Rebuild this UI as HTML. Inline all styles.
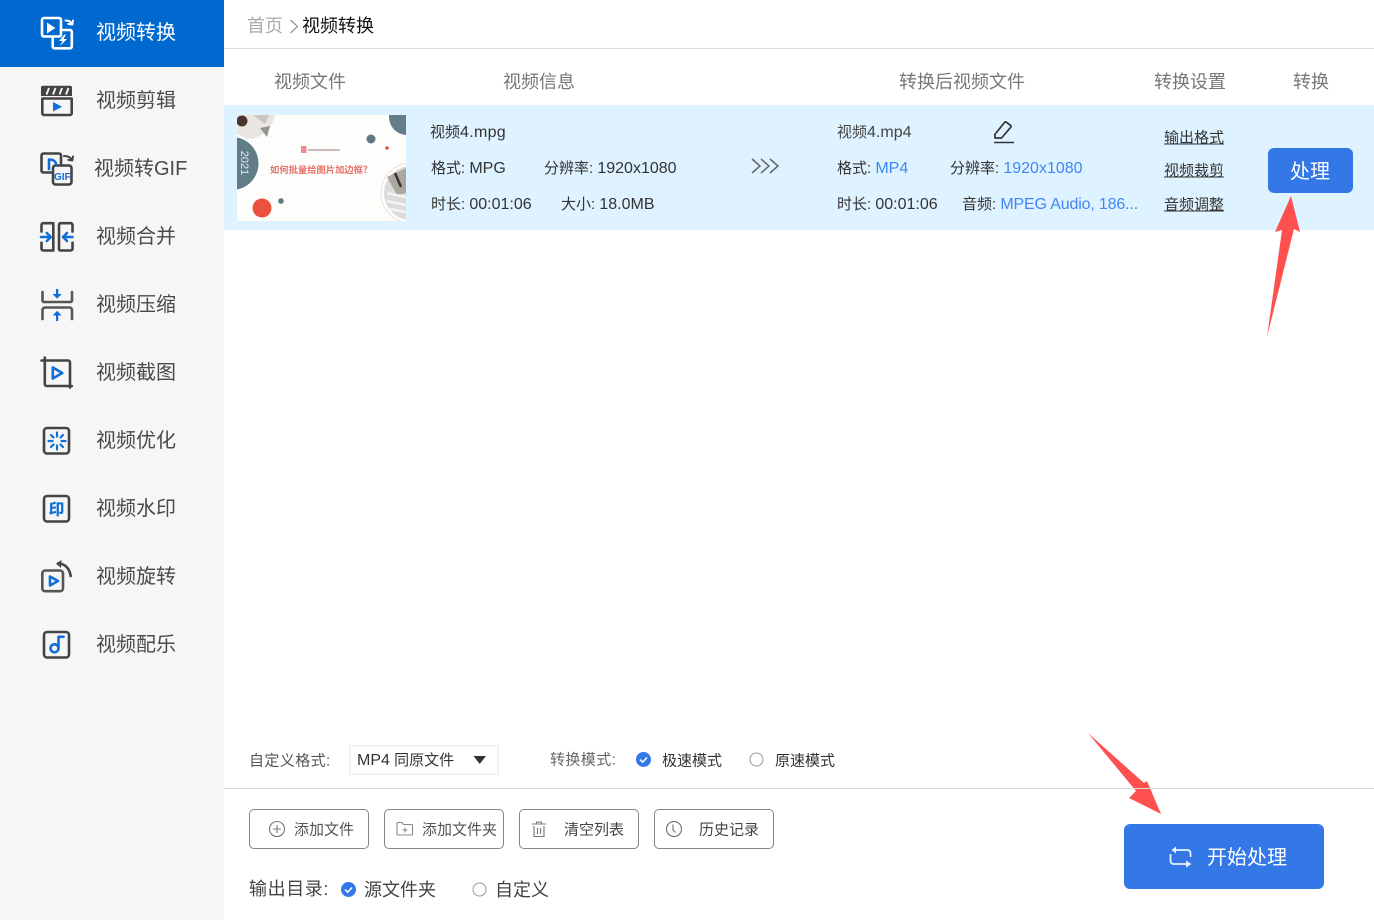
<!DOCTYPE html>
<html lang="zh"><head><meta charset="utf-8"><title>视频转换</title>
<style>
*{box-sizing:border-box}
html,body{margin:0;padding:0;width:1374px;height:920px;overflow:hidden;background:#fff}
body{position:relative;font-family:"Liberation Sans","Noto Sans CJK SC",sans-serif;color:#333}
.a{position:absolute;white-space:nowrap}
.t{position:absolute;white-space:nowrap;transform:translateY(calc(-50% + 1px));line-height:1}
.s{font-size:20px;color:#4a4a4a;left:96px}
.h{font-size:18px;color:#777}
.i{font-size:15px;color:#333}
.n{font-size:16px}
.b{color:#3f87f5}
.l{font-size:15px;color:#333;text-decoration:underline;left:1164px}
.btn{position:absolute;top:809px;width:120px;height:40px;border:1px solid #858585;border-radius:5px;background:#fff}
.m{font-size:15px;color:#555}
svg{position:absolute;overflow:visible}
.d{fill:none;stroke:#444;stroke-width:2.6;stroke-linecap:round;stroke-linejoin:round}
.e{fill:none;stroke:#0f6fd8;stroke-width:2.6;stroke-linecap:round;stroke-linejoin:round}
</style></head><body>
<div class="a" style="left:0;top:0;width:224px;height:920px;background:#f6f6f6"></div>
<div class="a" style="left:0;top:0;width:224px;height:67px;background:#0069cf"></div>

<span class="t s" style="top:32px;color:#fff">视频转换</span>
<span class="t s" style="top:100px">视频剪辑</span>
<span class="t s" style="top:168px;left:94px">视频转GIF</span>
<span class="t s" style="top:236px">视频合并</span>
<span class="t s" style="top:304px">视频压缩</span>
<span class="t s" style="top:372px">视频截图</span>
<span class="t s" style="top:440px">视频优化</span>
<span class="t s" style="top:508px">视频水印</span>
<span class="t s" style="top:576px">视频旋转</span>
<span class="t s" style="top:644px">视频配乐</span>

<svg style="left:0;top:0" width="224" height="680" viewBox="0 0 224 680">
<!-- 1 convert -->
<g fill="none" stroke="#fff" stroke-width="2.6" stroke-linejoin="round" stroke-linecap="round">
<rect x="42" y="18" width="19" height="18.500" rx="2"/>
<path d="M61 30h9a1.800 1.800 0 0 1 1.800 1.800v14.700a1.800 1.800 0 0 1-1.800 1.800H54.500a1.800 1.800 0 0 1-1.800-1.800V37"/>
<path d="M65.500 20.500c3 0 5.500.8 6.500 3.500M73 20.500l-.7 4-4-.6" stroke-width="2"/>
</g>
<path d="M47 22.500v11l8.500-5.500z" fill="#fff"/><path d="M64.500 34.500l-5.500 6.500h3.500l-2.500 5 7-7h-3.500l2.500-4.500z" fill="#fff"/>
<!-- 2 clip -->
<path d="M41 87.500a1.800 1.800 0 0 1 1.800-1.800h27.400a1.800 1.800 0 0 1 1.800 1.800v8.500H41z" fill="#444"/>
<path d="M46.500 94.500l2.500-6.500M53 94.500l2.500-6.500M59.500 94.500l2.500-6.500M66 94.500l2.500-6.500" stroke="#f6f6f6" stroke-width="1.900"/>
<path d="M42.300 98.500h29.400v14.700a1.800 1.800 0 0 1-1.800 1.800H44.100a1.800 1.800 0 0 1-1.800-1.800z" class="d"/>
<path d="M53 102v9.500l9-4.700z" fill="#0f6fd8"/>
<!-- 3 gif -->
<g class="d"><path d="M51.500 172.500h-8a2 2 0 0 1-2-2v-15a2 2 0 0 1 2-2h15.500a2 2 0 0 1 2 2v9"/><rect x="53" y="165.500" width="18.500" height="19" rx="2.500"/><path d="M64 156c3.500 0 6.500 1 8 4M73 156.500l-.7 4-4-.7" stroke-width="2"/></g>
<path d="M49 159.500v9.500M49 159.500c4.500 0 7 2 7 5" class="e"/>
<text x="62.300" y="180" font-family="Liberation Sans" font-weight="bold" font-size="10" fill="#0f6fd8" text-anchor="middle">GIF</text>
<!-- 4 merge -->
<g class="d">
<path d="M41.500 231.500v-6.500a1.800 1.800 0 0 1 1.800-1.800H53.300V250.500H43.300a1.800 1.800 0 0 1-1.800-1.800v-6"/>
<path d="M72.500 231.500v-6.500a1.800 1.800 0 0 0-1.800-1.800H60.500a1.500 1.500 0 0 0-1.500 1.500V249a1.500 1.500 0 0 0 1.500 1.500h10.200a1.800 1.800 0 0 0 1.800-1.800v-6"/></g>
<g class="e"><path d="M41 237h9M46.800 233l4 4-4 4M72.500 237h-9M67 233l-4 4 4 4"/></g>
<!-- 5 compress -->
<g class="d" style="stroke:#555"><path d="M42.500 292v8.500a1.500 1.500 0 0 0 1.500 1.500h26.500a1.500 1.500 0 0 0 1.500-1.500V292M42.500 319v-9a2.500 2.500 0 0 1 2.500-2.500h24.500a2.500 2.500 0 0 1 2.500 2.500v9"/></g>
<g fill="#0f6fd8"><rect x="56" y="289" width="2.200" height="6"/><path d="M52.500 294h9.200l-4.600 4.600zM52.500 315.500h9.200l-4.600-4.600z"/><rect x="56" y="315" width="2.200" height="6"/></g>
<!-- 6 crop -->
<g class="d"><path d="M41.500 360.500h26.500a2 2 0 0 1 2 2v25M44.800 357.500v26.500a2 2 0 0 0 2 2h25"/></g>
<path d="M52.800 367.500v11l9.500-5.500z" class="e"/>
<!-- 7 optimize -->
<rect x="44" y="428" width="25" height="25.500" rx="3" class="d"/>
<g class="e" style="stroke-width:2.200"><path d="M57 432.500v4M57 445.500v4M48.500 441h4M61.500 441h4M51 435l2.500 2.500M60.500 444.500l2.500 2.500M51 447l2.500-2.500M60.500 437.500l2.500-2.500"/></g>
<!-- 8 watermark -->
<rect x="44" y="496" width="25" height="25.500" rx="3" class="d"/>
<text x="56.500" y="514.500" font-family="Noto Sans CJK SC" font-weight="bold" font-size="15.500" fill="#0f6fd8" stroke="#0f6fd8" stroke-width=".3" text-anchor="middle">印</text>
<!-- 9 rotate -->
<rect x="42.300" y="570.500" width="20.700" height="20.700" rx="3" class="d" style="stroke:#555"/>
<path d="M50 576.500v9l8-4.500z" class="e"/>
<path d="M58 563.500c6.500 0 11.500 4.500 12.700 12.500" class="d"/><path d="M61.500 560l-5.500 3.500 5 4.500z" fill="#444"/>
<!-- 10 music -->
<rect x="44" y="632" width="25" height="25.500" rx="3" class="d"/>
<g class="e"><circle cx="54.500" cy="648.300" r="4"/><path d="M58.500 648.300v-11.500h5"/></g>
</svg>

<!-- header -->
<span class="t" style="left:247px;top:25px;font-size:18px;color:#aaa">首页</span>
<svg style="left:289px;top:18px" width="12" height="16"><path d="M1.500 2l7 6.500-7 6.500" fill="none" stroke="#999" stroke-width="1.300"/></svg>
<span class="t" style="left:302px;top:25px;font-size:18px;color:#111">视频转换</span>
<div class="a" style="left:224px;top:48px;width:1150px;height:1px;background:#dcdcdc"></div>

<span class="t h" style="left:274px;top:81px">视频文件</span>
<span class="t h" style="left:503px;top:81px">视频信息</span>
<span class="t h" style="left:899px;top:81px">转换后视频文件</span>
<span class="t h" style="left:1154px;top:81px">转换设置</span>
<span class="t h" style="left:1293px;top:81px">转换</span>

<div class="a" style="left:224px;top:105px;width:1150px;height:125px;background:#def3ff"></div>

<!-- thumbnail -->
<svg style="left:237px;top:115px" width="169" height="106" viewBox="0 0 169 106">
<defs><clipPath id="c"><rect width="169" height="106"/></clipPath></defs>
<g clip-path="url(#c)">
<rect width="169" height="106" fill="#fdfdfb"/>
<circle cx="10" cy="-4" r="28" fill="#e9e6e2"/><circle cx="5" cy="6" r="5.500" fill="#4d332d"/><path d="M23 13l10-2-3 11z" fill="#8f9694"/><path d="M16 0l16 0-4 9z" fill="#c9c5bf"/>
<circle cx="-5" cy="48.500" r="29" fill="#fff"/><circle cx="-5" cy="48.500" r="26.500" fill="#617d87"/>
<text transform="translate(4 48) rotate(90)" font-family="Liberation Sans" font-size="11" fill="#e3ebee" text-anchor="middle">2021</text>
<circle cx="170" cy="2" r="18" fill="#637e89"/><circle cx="134" cy="24" r="4.500" fill="#5d7a85"/><circle cx="150" cy="33" r="1.800" fill="#ea4f44"/>
<circle cx="174" cy="78" r="30" fill="#fff" stroke="#f7d9d5"/><circle cx="174" cy="78" r="27" fill="#dcdcdc"/><path d="M150 62l19-9v25l-9 2z" fill="#aaa6a0"/><path d="M158 58l6 14" stroke="#333" stroke-width="2.500"/>
<path d="M150 78l19 4M150 86l19 4M152 94l17 3" stroke="#f3f3f3" stroke-width="2.500"/>
<circle cx="25" cy="93" r="9.500" fill="#e9513d"/><circle cx="44" cy="86" r="2.800" fill="#5d7a85"/>
<rect x="64" y="31" width="5.500" height="7" fill="#f08a92"/><rect x="71" y="34" width="32" height="2" fill="#c9bcbc"/>
<text x="33" y="58" font-family="Noto Sans CJK SC" font-size="9.300" font-weight="bold" fill="#e9706a">如何批量给图片加边框?</text>
</g></svg>

<!-- left info -->
<span class="t i" style="left:430px;top:132px;">视频<span class="n" style="letter-spacing:.3px">4.mpg</span></span>
<span class="t i" style="left:431px;top:168px">格式: <span class="n">MPG</span></span>
<span class="t i" style="left:544px;top:168px">分辨率: <span class="n">1920x1080</span></span>
<span class="t i" style="left:431px;top:204px">时长: <span class="n">00:01:06</span></span>
<span class="t i" style="left:561px;top:204px">大小: <span class="n">18.0MB</span></span>

<svg style="left:750px;top:157px" width="32" height="18" fill="none" stroke="#666" stroke-width="1.500"><path d="M2 2l8 7-8 7M11 2l8 7-8 7M20 2l8 7-8 7"/></svg>

<!-- right info -->
<span class="t i" style="left:837px;top:132px;color:#444">视频<span class="n">4.mp4</span></span>
<svg style="left:992px;top:120px" width="24" height="24" fill="none" stroke="#333" stroke-width="1.700" stroke-linejoin="round"><path d="M3 18l-.2-3.500L12.500 2.500a1.500 1.500 0 0 1 2-.2l4 3a1.500 1.500 0 0 1 .2 2L9.500 18z"/><path d="M2 22.500h20" stroke-width="1.600"/></svg>
<span class="t i" style="left:837px;top:168px">格式: <span class="n b">MP4</span></span>
<span class="t i" style="left:950px;top:168px">分辨率: <span class="n b">1920x1080</span></span>
<span class="t i" style="left:837px;top:204px">时长: <span class="n">00:01:06</span></span>
<span class="t i" style="left:962px;top:204px">音频: <span class="n b" style="letter-spacing:-.16px">MPEG Audio, 186...</span></span>

<span class="t l" style="top:137px">输出格式</span>
<span class="t l" style="top:170px">视频裁剪</span>
<span class="t l" style="top:204px">音频调整</span>

<div class="a" style="left:1268px;top:148px;width:85px;height:45px;background:#3478e8;border-radius:6px"></div>
<span class="t" style="left:1290px;top:171px;font-size:20px;color:#fff">处理</span>

<!-- red arrows -->
<svg style="left:0;top:0" width="1374" height="920"><path d="M1267 337L1282 230L1275 232L1291 196L1300 232L1294 229z" fill="#ff5050"/><path d="M1088 733L1144 783L1147 781L1161 814L1129 798L1136 791z" fill="#ff5050"/></svg>

<!-- bottom config -->
<span class="t m" style="left:249px;top:760px;letter-spacing:.4px">自定义格式:</span>
<div class="a" style="left:349px;top:745px;width:150px;height:30px;border:2px solid #f2f2f2;background:#fff"></div>
<span class="t" style="left:357px;top:760px;font-size:15px;color:#333"><span class="n">MP4</span> 同原文件</span>
<svg style="left:473px;top:755px" width="14" height="10"><path d="M.5 1h12.500L6.700 9z" fill="#333"/></svg>
<span class="t m" style="left:550px;top:759px;color:#666;letter-spacing:.4px">转换模式:</span>
<svg style="left:635px;top:751px" width="17" height="17"><circle cx="8.500" cy="8.500" r="7.500" fill="#3478e8"/><path d="M5 8.500l2.700 2.700L12 6.500" fill="none" stroke="#fff" stroke-width="1.500"/></svg>
<span class="t i" style="left:662px;top:760px">极速模式</span>
<svg style="left:748px;top:751px" width="17" height="17"><circle cx="8.500" cy="8.500" r="6.500" fill="#fff" stroke="#999"/></svg>
<span class="t i" style="left:775px;top:760px">原速模式</span>

<div class="a" style="left:224px;top:788px;width:1150px;height:1px;background:#d8d8d8"></div>

<!-- buttons -->
<div class="btn" style="left:249px"></div>
<svg style="left:268px;top:820px" width="18" height="18" fill="none" stroke="#777" stroke-width="1.100"><circle cx="9" cy="9" r="7.500"/><path d="M9 5v8M5 9h8"/></svg>
<span class="t i" style="left:294px;top:829px;color:#555">添加文件</span>
<div class="btn" style="left:384px"></div>
<svg style="left:396px;top:820px" width="18" height="18" fill="none" stroke="#888" stroke-width="1.100"><path d="M1 3.500a1 1 0 0 1 1-1h4l1.500 2h8a1 1 0 0 1 1 1V14a1 1 0 0 1-1 1H2a1 1 0 0 1-1-1zM9 7.500v5M6.500 10h5"/></svg>
<span class="t i" style="left:422px;top:829px;color:#555">添加文件夹</span>
<div class="btn" style="left:519px"></div>
<svg style="left:530px;top:820px" width="18" height="18" fill="none" stroke="#777" stroke-width="1.100"><path d="M2 4h14M6.500 4V2h5v2M4 6v10.500h10V6M7.500 8v6M10.500 8v6"/></svg>
<span class="t i" style="left:564px;top:829px;color:#444">清空列表</span>
<div class="btn" style="left:654px"></div>
<svg style="left:665px;top:820px" width="18" height="18" fill="none" stroke="#777" stroke-width="1.200"><circle cx="9" cy="9" r="7.500"/><path d="M8 4.500V10l2.500 2.500"/></svg>
<span class="t i" style="left:699px;top:829px;color:#444">历史记录</span>

<span class="t" style="left:249px;top:888px;font-size:18px;color:#444;letter-spacing:.6px">输出目录:</span>
<svg style="left:340px;top:881px" width="17" height="17"><circle cx="8.500" cy="8.500" r="7.500" fill="#3478e8"/><path d="M5 8.500l2.700 2.700L12 6.500" fill="none" stroke="#fff" stroke-width="1.500"/></svg>
<span class="t" style="left:364px;top:889px;font-size:18px;color:#444">源文件夹</span>
<svg style="left:471px;top:881px" width="17" height="17"><circle cx="8.500" cy="8.500" r="6.500" fill="#fff" stroke="#999"/></svg>
<span class="t" style="left:495px;top:889px;font-size:18px;color:#444">自定义</span>

<!-- start -->
<div class="a" style="left:1124px;top:824px;width:200px;height:65px;background:#3478e8;border-radius:6px"></div>
<svg style="left:0;top:0" width="1374" height="920"><g fill="none" stroke="#e8f2ff" stroke-width="1.800"><path d="M1170.500 854v7a3 3 0 0 0 3 3H1188"/><path d="M1190.500 857v-4a3 3 0 0 0-3-3H1174"/></g><path d="M1176 846.500v7l-4.500-3.500zM1186 860.500v7l5.500-3.500z" fill="#e8f2ff"/></svg>
<span class="t" style="left:1207px;top:857px;font-size:20px;color:#fff">开始处理</span>
</body></html>
